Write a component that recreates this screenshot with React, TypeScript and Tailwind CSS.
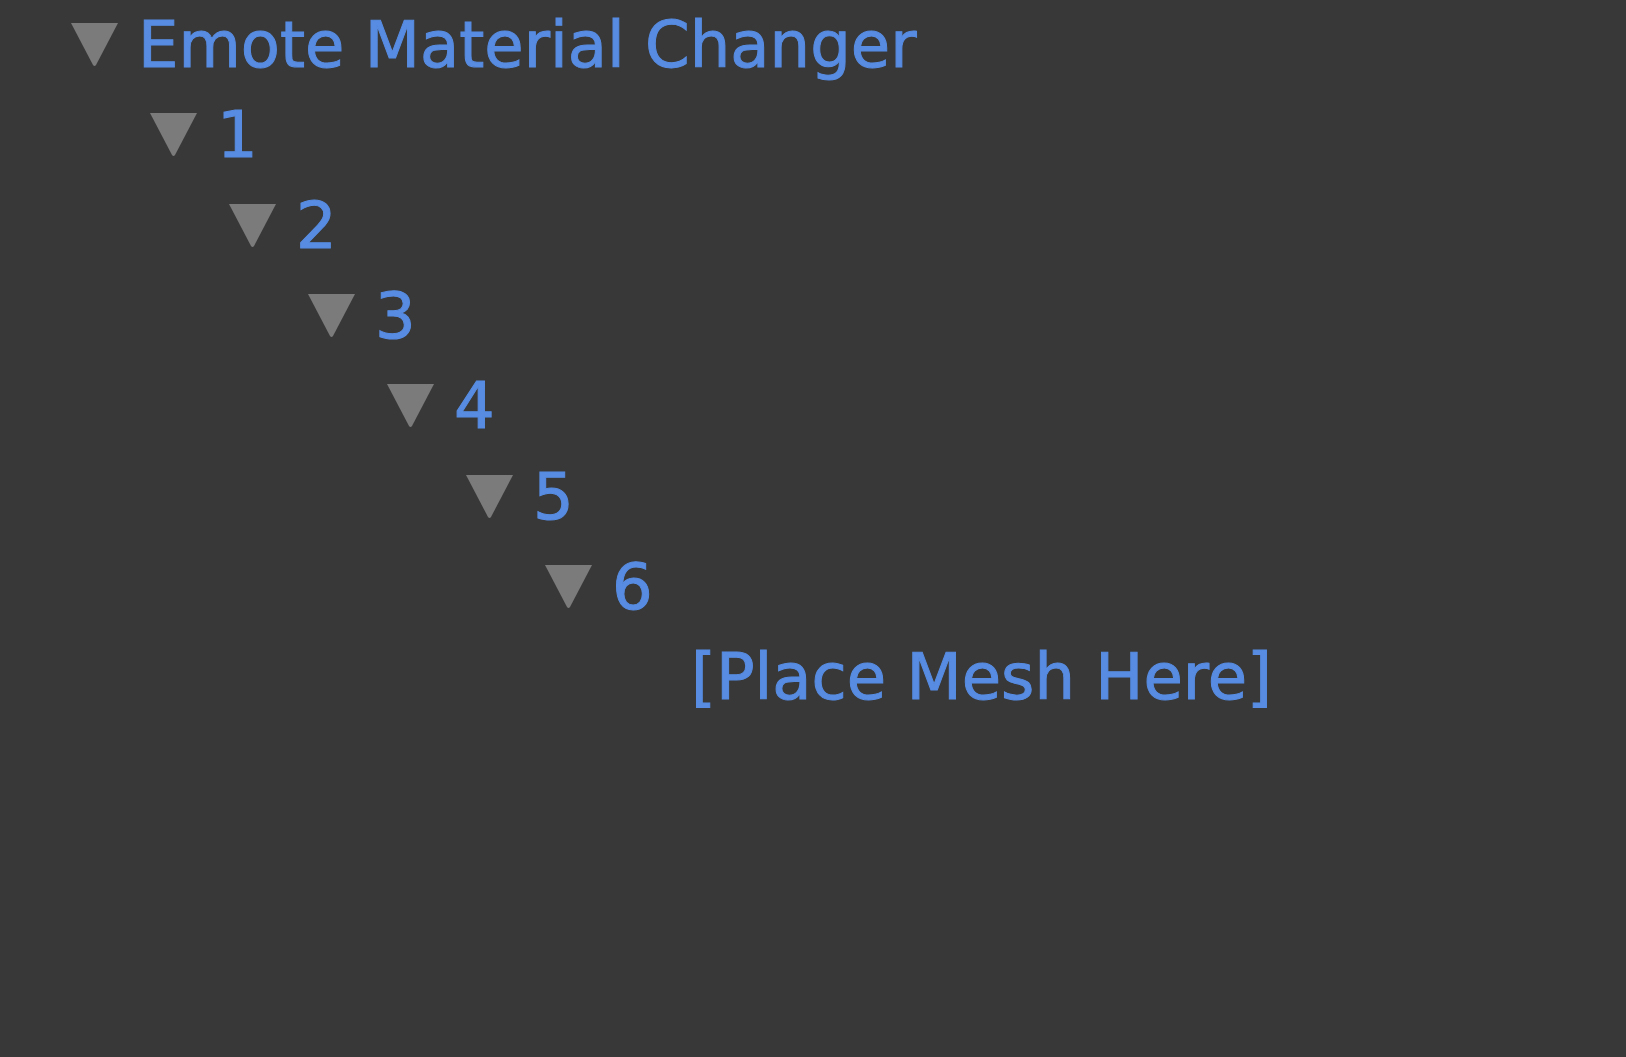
import React from 'react';

type Node = { label: string; depth: number; open?: boolean };

const rows: Node[] = [
  { label: 'Emote Material Changer', depth: 0, open: true },
  { label: '1', depth: 1, open: true },
  { label: '2', depth: 2, open: true },
  { label: '3', depth: 3, open: true },
  { label: '4', depth: 4, open: true },
  { label: '5', depth: 5, open: true },
  { label: '6', depth: 6, open: true },
  { label: '[Place Mesh Here]', depth: 7 },
];

function Foldout() {
  return (
    <svg width="51" height="46" viewBox="0 0 51 46" className="shrink-0">
      <path d="M2 1 H49 L27 43 Q25.5 45 24 43 Z" fill="#7b7b7b" />
    </svg>
  );
}

export default function App() {
  return (
    <div className="w-full h-screen bg-[#383838] overflow-hidden font-['DejaVu_Sans',sans-serif]">
      {rows.map((row) => (
        <div
          key={row.label}
          className="h-[90.3px] flex items-center"
          style={{ paddingLeft: 69 + row.depth * 79 }}
        >
          {row.open ? <Foldout /> : <div className="w-[51px] shrink-0" />}
          <span className="ml-[18px] text-[64px] leading-none text-[#578ce2] whitespace-nowrap [-webkit-text-stroke:1px_#578ce2]">
            {row.label}
          </span>
        </div>
      ))}
    </div>
  );
}
